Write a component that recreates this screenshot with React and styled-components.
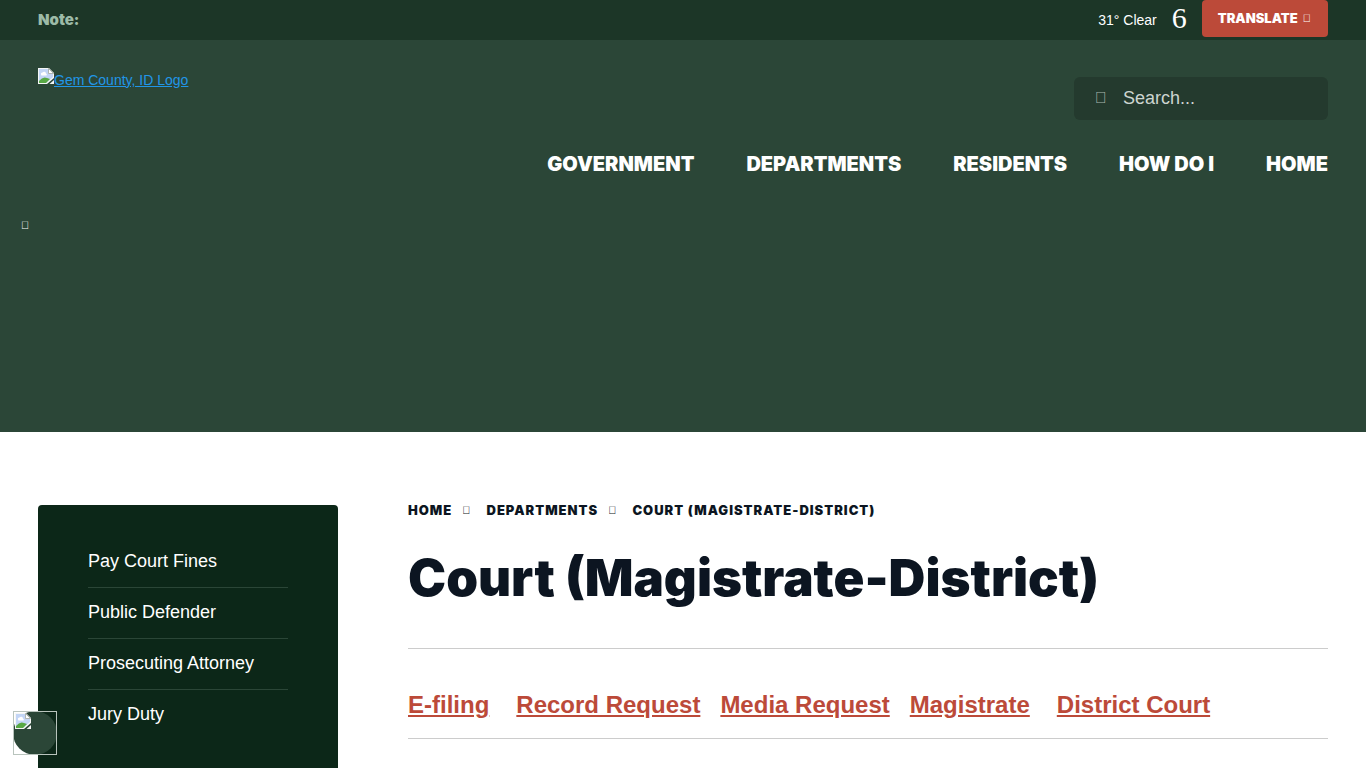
import React from "react";
import styled, { createGlobalStyle } from "styled-components";

const heavy = `"Inter", "Arial Black", sans-serif`;
const body = `"Liberation Sans", Arial, sans-serif`;

const GlobalStyle = createGlobalStyle`
  *, *::before, *::after { box-sizing: border-box; }
  body {
    margin: 0;
    background: #fff;
    color: #0c1521;
    font-family: ${body};
    font-size: 18px;
  }
  #root { overflow-x: hidden; }
`;

const TopBar = styled.div`
  display: flex;
  justify-content: space-between;
  align-items: flex-start;
  height: 40px;
  padding: 0 38px;
  background: #1c3627;
  color: #fff;
`;

const Note = styled.strong`
  color: #9dbba7;
  font: 900 15px/40px ${heavy};
`;

const Tools = styled.div`
  display: flex;
  align-items: flex-start;
`;

const Weather = styled.a`
  display: flex;
  gap: 15px;
  margin-right: 15px;
  color: #fff;
  font-size: 14px;
  line-height: 40px;
  text-decoration: none;
`;

const WeatherIcon = styled.span`
  font: 30px/36px "Liberation Serif", serif;
`;

const Translate = styled.button`
  display: flex;
  align-items: center;
  gap: 5px;
  height: 37px;
  padding: 0 17px 0 16px;
  border: 0;
  border-radius: 4px;
  background: #bc4a39;
  color: #fff;
  font: 900 13px/37px ${heavy};
  text-transform: uppercase;
`;

const Glyph = styled.span`
  font: 400 ${(p) => p.$size || 11}px/1 ${body};
  letter-spacing: 0;
`;

const Header = styled.header`
  min-height: 392px;
  padding: 28px 38px 0;
  background: #2b4637;
`;

const HeaderRow = styled.div`
  display: flex;
  justify-content: space-between;
  align-items: flex-start;
`;

const Logo = styled.a`
  display: flex;
  align-items: flex-start;
  color: #2196e8;
  font-size: 14px;
  line-height: 24px;
`;

const Search = styled.label`
  display: flex;
  align-items: center;
  gap: 16px;
  width: 254px;
  height: 43px;
  margin-top: 9px;
  padding: 0 21px 2px;
  border-radius: 6px;
  background: #243a2e;
  color: #a9b8ae;
`;

const SearchInput = styled.input`
  flex: 1;
  min-width: 0;
  padding: 0;
  border: 0;
  outline: 0;
  background: transparent;
  color: #fff;
  font: 18px/24px ${body};
  &::placeholder { color: #cdd5d0; opacity: 1; }
`;

const Nav = styled.nav`
  display: flex;
  flex-wrap: wrap;
  justify-content: flex-end;
  gap: 0 52px;
  margin-top: 30px;
`;

const NavLink = styled.a`
  color: #fff;
  font: 900 20px/28px ${heavy};
  text-decoration: none;
  text-transform: uppercase;
`;

const SlideToggle = styled.button`
  display: block;
  margin: 39px 0 0 -17px;
  padding: 0;
  border: 0;
  background: transparent;
  color: #fff;
  line-height: 16px;
`;

const Page = styled.div`
  display: grid;
  grid-template-columns: 300px minmax(0, 1fr);
  gap: 70px;
  padding: 73px 38px 0;
`;

const Sidebar = styled.aside`
  min-height: 300px;
  padding: 32px 50px 40px;
  border-radius: 4px;
  background: #0c2718;
`;

const SideList = styled.ul`
  margin: 0;
  padding: 0;
  list-style: none;
`;

const SideItem = styled.li`
  padding: 14px 0 15px;
  border-bottom: 1px solid #2b4637;
  line-height: 21px;
  &:last-child { border-bottom: 0; }
`;

const SideLink = styled.a`
  color: #fff;
  text-decoration: none;
`;

const Breadcrumb = styled.nav`
  display: flex;
  align-items: center;
  gap: 10px;
  margin-top: -5px;
  font: 900 13px/20px ${heavy};
  letter-spacing: 1px;
  text-transform: uppercase;
`;

const Crumb = styled.a`
  color: #0c1521;
  text-decoration: none;
`;

const Separator = styled(Glyph)`
  margin-right: 6px;
`;

const Title = styled.h1`
  margin: 28px 0 40px;
  font: 900 51px/60px ${heavy};
`;

const Rule = styled.hr`
  height: 1px;
  margin: 0;
  border: 0;
  background: #ccc;
`;

const QuickLinks = styled.div`
  display: flex;
  flex-wrap: wrap;
  padding: 41px 0 18px;
`;

const QuickLink = styled.a`
  margin-right: ${(p) => (p.$wide ? 27 : 20)}px;
  color: #bc4a39;
  font-size: 24px;
  font-weight: 700;
  line-height: 30px;
`;

const Floating = styled.button`
  position: fixed;
  left: 13px;
  bottom: 13px;
  width: 44px;
  height: 44px;
  padding: 0;
  border: 0;
  background: transparent;
  svg { display: block; }
`;

const PictureShape = () => (
  <>
    <path d="M0 0H11L16 5V10L9 16H0Z" fill="#f4f6f5" />
    <path d="M1 1H10V6H15V9L8 15H1Z" fill="#c3d5f5" />
    <path d="M3 6.500a1.500 1.500 0 0 1 1.500-2a2 2 0 0 1 3.500 1a1.300 1.300 0 0 1 .5 2H3.500Z" fill="#fff" />
    <path d="M1 15V13Q5 8 9 10L12 11L8 15H1Z" fill="#58a845" />
    <path d="M10.500 .5V5.500H15.500Z" fill="#fff" stroke="#8e9691" strokeWidth=".7" />
    <path d="M16 12V16H11.500Z" fill="#f4f6f5" />
  </>
);

const navItems = ["Government", "Departments", "Residents", "How Do I", "Home"];
const sideItems = ["Pay Court Fines", "Public Defender", "Prosecuting Attorney", "Jury Duty"];
const quickLinks = [
  { label: "E-filing", wide: true },
  { label: "Record Request" },
  { label: "Media Request" },
  { label: "Magistrate", wide: true },
  { label: "District Court" },
];

export default function App() {
  return (
    <>
      <GlobalStyle />
      <TopBar>
        <Note>Note:</Note>
        <Tools>
          <Weather href="#weather">
            <span>31° Clear</span>
            <WeatherIcon>6</WeatherIcon>
          </Weather>
          <Translate type="button">
            Translate <Glyph aria-hidden="true">{"\uf078"}</Glyph>
          </Translate>
        </Tools>
      </TopBar>
      <Header>
        <HeaderRow>
          <Logo href="#home">
            <svg width="16" height="16" viewBox="0 0 16 16" aria-hidden="true">
              <PictureShape />
            </svg>
            Gem County, ID Logo
          </Logo>
          <Search>
            <Glyph $size={16} aria-hidden="true">{"\uf002"}</Glyph>
            <SearchInput type="search" placeholder="Search..." aria-label="Search" />
          </Search>
        </HeaderRow>
        <Nav aria-label="Main">
          {navItems.map((item) => (
            <NavLink key={item} href="#menu">{item}</NavLink>
          ))}
        </Nav>
        <SlideToggle type="button" aria-label="Pause slideshow">
          <Glyph aria-hidden="true">{"\uf04c"}</Glyph>
        </SlideToggle>
      </Header>
      <Page>
        <Sidebar>
          <SideList>
            {sideItems.map((item) => (
              <SideItem key={item}>
                <SideLink href="#page">{item}</SideLink>
              </SideItem>
            ))}
          </SideList>
        </Sidebar>
        <main>
          <Breadcrumb aria-label="Breadcrumb">
            <Crumb href="#home">Home</Crumb>
            <Separator aria-hidden="true">{"\uf054"}</Separator>
            <Crumb href="#departments">Departments</Crumb>
            <Separator aria-hidden="true">{"\uf054"}</Separator>
            <span>Court (Magistrate-District)</span>
          </Breadcrumb>
          <Title>Court (Magistrate-District)</Title>
          <Rule />
          <QuickLinks>
            {quickLinks.map(({ label, wide }) => (
              <QuickLink key={label} href="#section" $wide={wide}>{label}</QuickLink>
            ))}
          </QuickLinks>
          <Rule />
        </main>
      </Page>
      <Floating type="button" aria-label="Accessibility options">
        <svg width="44" height="44" viewBox="0 0 44 44" aria-hidden="true">
          <circle cx="22" cy="22" r="22" fill="#2b4637" />
          <svg x="2" y="2" width="16" height="16" viewBox="0 0 16 16">
            <PictureShape />
          </svg>
          <rect x=".5" y=".5" width="43" height="43" fill="none" stroke="#b9c4bd" />
        </svg>
      </Floating>
    </>
  );
}
